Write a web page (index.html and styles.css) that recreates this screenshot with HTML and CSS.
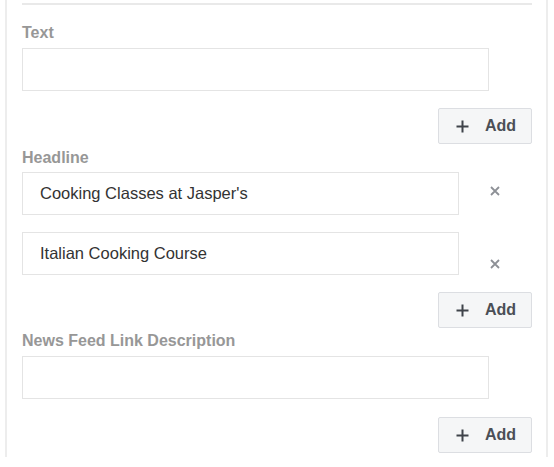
FILE: index.html
```html
<!DOCTYPE html>
<html>
<head>
<meta charset="utf-8">
<link rel="stylesheet" href="styles.css">
</head>
<body>
<div class="panel">
  <div class="topline"></div>

  <div class="label label-first">Text</div>
  <div class="input input-wide"></div>
  <div class="add-row">
    <button class="add-btn"><svg class="plus" width="13" height="13" viewBox="0 0 13 13"><path d="M6.5 0.5V12.5M0.5 6.5H12.5" stroke="#3f434a" stroke-width="2"/></svg><span>Add</span></button>
  </div>

  <div class="label label-headline">Headline</div>
  <div class="input-row">
    <div class="input input-narrow">Cooking Classes at Jasper's</div>
    <svg class="remove remove-a" width="10" height="10" viewBox="0 0 10 10"><path d="M1 1L9 9M9 1L1 9" stroke="#8d9096" stroke-width="1.8"/></svg>
  </div>
  <div class="input-row row-second">
    <div class="input input-narrow">Italian Cooking Course</div>
    <svg class="remove remove-b" width="10" height="10" viewBox="0 0 10 10"><path d="M1 1L9 9M9 1L1 9" stroke="#8d9096" stroke-width="1.8"/></svg>
  </div>
  <div class="add-row">
    <button class="add-btn"><svg class="plus" width="13" height="13" viewBox="0 0 13 13"><path d="M6.5 0.5V12.5M0.5 6.5H12.5" stroke="#3f434a" stroke-width="2"/></svg><span>Add</span></button>
  </div>

  <div class="label label-news">News Feed Link Description</div>
  <div class="input input-wide"></div>
  <div class="add-row add-last">
    <button class="add-btn"><svg class="plus" width="13" height="13" viewBox="0 0 13 13"><path d="M6.5 0.5V12.5M0.5 6.5H12.5" stroke="#3f434a" stroke-width="2"/></svg><span>Add</span></button>
  </div>
</div>
</body>
</html>
```

FILE: styles.css
```css
html, body {
  margin: 0;
  padding: 0;
  background: #ffffff;
}

body {
  font-family: "Liberation Sans", Arial, sans-serif;
  width: 554px;
  height: 467px;
  overflow: hidden;
}

.panel {
  margin-left: 5px;
  width: 510px;
  height: 454px;
  padding: 3px 14px 0 15px;
  box-sizing: content-box;
  border-left: 2px solid #ededed;
  border-right: 2px solid #ededed;
  display: flex;
  flex-direction: column;
  overflow: hidden;
}

.topline {
  height: 2px;
  width: 510px;
  background: #e9e9e9;
  flex-shrink: 0;
}

.label {
  font-size: 16px;
  line-height: 20px;
  font-weight: bold;
  color: #979797;
  height: 20px;
  flex-shrink: 0;
}

.label-first { margin-top: 18px; margin-bottom: 5px; }
.label-headline { margin-top: 4px; margin-bottom: 4px; }
.label-news { margin-top: 3px; margin-bottom: 5px; }

.input {
  height: 43px;
  box-sizing: border-box;
  border: 1px solid #e4e4e4;
  background: #fff;
  flex-shrink: 0;
  font-size: 16.5px;
  color: #333333;
  padding-left: 17px;
  display: flex;
  align-items: center;
}

.input-wide { width: 467px; }
.input-narrow { width: 437px; }

.input-row {
  display: flex;
  align-items: flex-start;
  flex-shrink: 0;
}

.row-second { margin-top: 17px; }

.remove {
  margin-left: 31px;
  flex-shrink: 0;
}

.remove-a { margin-top: 14px; }
.remove-b { margin-top: 27px; }

.add-row {
  display: flex;
  justify-content: flex-end;
  margin-top: 17px;
  flex-shrink: 0;
}

.add-last { margin-top: 18px; }

.add-btn {
  width: 94px;
  height: 36px;
  box-sizing: border-box;
  border: 1px solid #dcdee2;
  border-radius: 2px;
  background: #f5f6f7;
  display: flex;
  align-items: center;
  justify-content: center;
  gap: 16px;
  padding: 0 0 0 2px;
  font-family: "Liberation Sans", Arial, sans-serif;
  font-size: 16px;
  font-weight: bold;
  color: #4b4f56;
}

.plus { display: block; }
```
